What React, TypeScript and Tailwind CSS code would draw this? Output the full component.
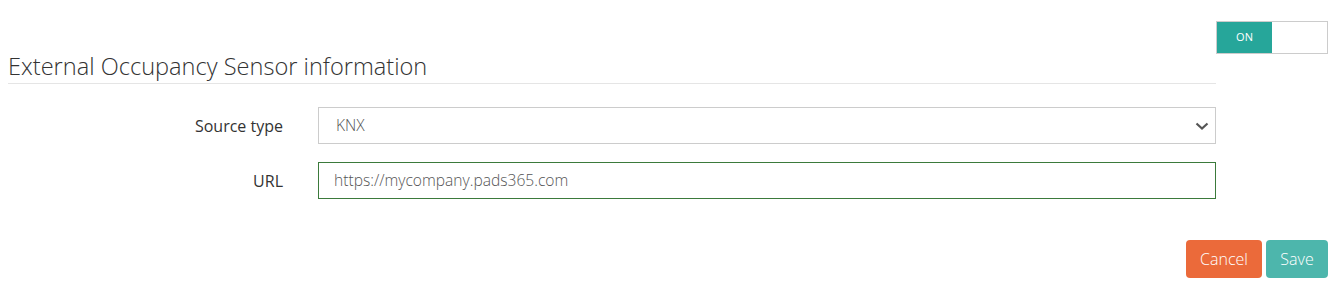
const ChevronDown = () => (
  <svg width="14" height="8" viewBox="0 0 14 8" fill="none" className="text-[#555]">
    <path d="M1.5 1.5l5.5 5 5.5-5" stroke="currentColor" strokeWidth="2.2" />
  </svg>
);

const FormRow = ({ label, children }: { label: string; children: React.ReactNode }) => (
  <div className="flex items-center">
    <label className="w-[275px] shrink-0 text-right text-[16px] leading-6 text-[#333]">{label}</label>
    <div className="ml-[35px] w-[898px]">{children}</div>
  </div>
);

export default function App() {
  return (
    <div className="w-[1335px] h-[286px] bg-white pl-2 pr-[7px] font-['Open_Sans',sans-serif]">
      <div className="flex items-start">
        <div className="flex-1 pt-[50px]">
          <h2 className="text-[23.6px] leading-8 font-light text-[#333] border-b border-[#e5e5e5] pb-[1px]">
            External Occupancy Sensor information
          </h2>
        </div>
        <div className="w-[112px] pt-[21px]">
          <div className="flex h-[33px] border border-[#ccc]">
            <div className="w-[55px] bg-[#26a69a] text-white text-[11px] flex items-center justify-center">ON</div>
            <div className="flex-1 bg-white" />
          </div>
        </div>
      </div>

      <div className="mt-[23px] flex flex-col gap-[18px] mr-[112px]">
        <FormRow label="Source type">
          <div className="flex items-center justify-between h-[37px] border border-[#ccc] pl-[17px] pr-[6px] text-[15.6px] font-light text-[#555]">
            <span>KNX</span>
            <ChevronDown />
          </div>
        </FormRow>
        <FormRow label="URL">
          <div className="flex items-center h-[37px] border border-[#3b7a3b] pl-[15px] text-[15.6px] font-light text-[#555]">
            https://mycompany.pads365.com
          </div>
        </FormRow>
      </div>

      <div className="mt-[41px] flex justify-end gap-1">
        <button className="w-[76px] h-[38px] rounded bg-[#eb6a3a] text-white text-[16px] font-light">Cancel</button>
        <button className="w-[62px] h-[38px] rounded bg-[#4db6ac] text-white text-[16px] font-light">Save</button>
      </div>
    </div>
  );
}
